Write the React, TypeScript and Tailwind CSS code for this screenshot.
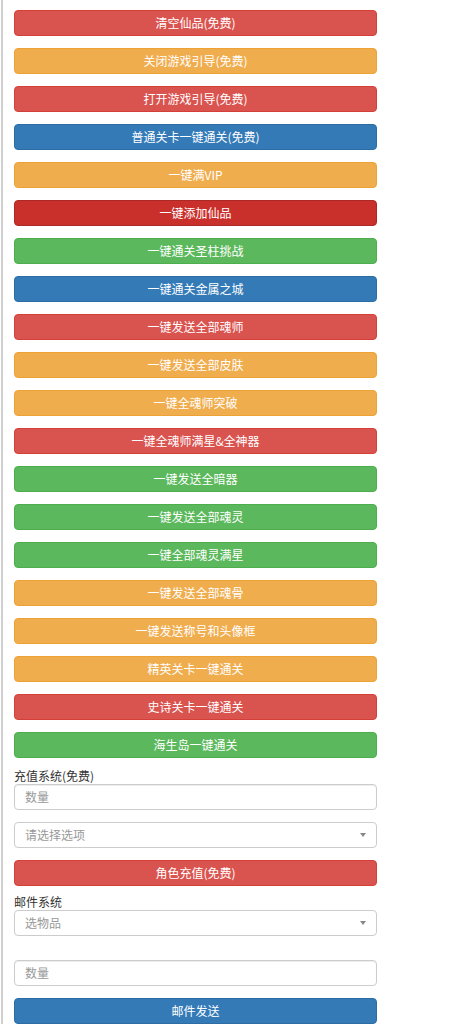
import React from "react";

const RED = "bg-[#d9534f] border-[#d43f3a]";
const ORANGE = "bg-[#f0ad4e] border-[#eea236]";
const BLUE = "bg-[#337ab7] border-[#2e6da4]";
const DARK = "bg-[#c9302c] border-[#ac2925]";
const GREEN = "bg-[#5cb85c] border-[#4cae4c]";

const buttons: [string, string][] = [
  ["清空仙品(免费)", RED],
  ["关闭游戏引导(免费)", ORANGE],
  ["打开游戏引导(免费)", RED],
  ["普通关卡一键通关(免费)", BLUE],
  ["一键满VIP", ORANGE],
  ["一键添加仙品", DARK],
  ["一键通关圣柱挑战", GREEN],
  ["一键通关金属之城", BLUE],
  ["一键发送全部魂师", RED],
  ["一键发送全部皮肤", ORANGE],
  ["一键全魂师突破", ORANGE],
  ["一键全魂师满星&全神器", RED],
  ["一键发送全暗器", GREEN],
  ["一键发送全部魂灵", GREEN],
  ["一键全部魂灵满星", GREEN],
  ["一键发送全部魂骨", ORANGE],
  ["一键发送称号和头像框", ORANGE],
  ["精英关卡一键通关", ORANGE],
  ["史诗关卡一键通关", RED],
  ["海生岛一键通关", GREEN],
];

function Btn({ label, color }: { label: string; color: string }) {
  return (
    <button
      className={`${color} h-[26px] w-full rounded-[4px] border text-[12px] leading-none text-white flex items-center justify-center`}
    >
      {label}
    </button>
  );
}

function Input({ placeholder }: { placeholder: string }) {
  return (
    <div className="h-[26px] w-full rounded-[4px] border border-[#ccc] bg-white shadow-[inset_0_1px_1px_rgba(0,0,0,0.075)] flex items-center pl-[10px] text-[12px] text-[#999]">
      {placeholder}
    </div>
  );
}

function Select({ placeholder }: { placeholder: string }) {
  return (
    <div className="h-[26px] w-full rounded-[4px] border border-[#ccc] bg-white flex items-center justify-between pl-[10px] pr-[10px] text-[12px] text-[#999]">
      <span>{placeholder}</span>
      <span className="w-0 h-0 border-l-[3px] border-r-[3px] border-t-[4px] border-l-transparent border-r-transparent border-t-[#888]" />
    </div>
  );
}

export default function App() {
  return (
    <div
      className="min-h-[1024px] w-[465px] bg-white pl-[1px]"
      style={{ fontFamily: '"Microsoft YaHei", "Noto Sans CJK SC", sans-serif' }}
    >
      <div className="border-l-2 border-[#cfcfcf] min-h-[1024px] pl-[11px] pt-[10px]">
        <div className="w-[363px] flex flex-col">
          <div className="flex flex-col gap-[12px]">
            {buttons.map(([l, c]) => (
              <Btn key={l} label={l} color={c} />
            ))}
          </div>
          <div className="mt-[10px] h-[16px] text-[12px] leading-[16px] text-[#333]">充值系统(免费)</div>
          <Input placeholder="数量" />
          <div className="mt-[12px]">
            <Select placeholder="请选择选项" />
          </div>
          <div className="mt-[12px]">
            <Btn label="角色充值(免费)" color={RED} />
          </div>
          <div className="mt-[8px] h-[16px] text-[12px] leading-[16px] text-[#333]">邮件系统</div>
          <Select placeholder="选物品" />
          <div className="mt-[24px]">
            <Input placeholder="数量" />
          </div>
          <div className="mt-[12px]">
            <Btn label="邮件发送" color={BLUE} />
          </div>
        </div>
      </div>
    </div>
  );
}
